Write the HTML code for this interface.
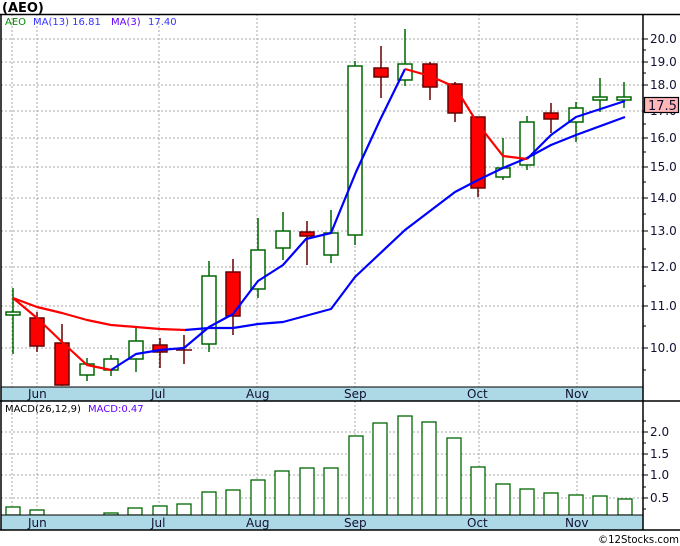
<!DOCTYPE html>
<html><head><meta charset="utf-8"><style>
html,body{margin:0;padding:0;background:#fff;}
svg{display:block;font-family:"DejaVu Sans","Liberation Sans",sans-serif;}
</style></head><body>
<svg width="680" height="546" viewBox="0 0 680 546" xmlns="http://www.w3.org/2000/svg">
<rect width="680" height="546" fill="#fff"/>
<text x="2" y="12" font-size="13" font-weight="bold" fill="#000">(AEO)</text>
<g stroke="#aaa" stroke-dasharray="2,2" stroke-width="1">
<line x1="1" x2="643" y1="39" y2="39"/><line x1="1" x2="643" y1="62" y2="62"/><line x1="1" x2="643" y1="85" y2="85"/><line x1="1" x2="643" y1="111" y2="111"/><line x1="1" x2="643" y1="138" y2="138"/><line x1="1" x2="643" y1="167" y2="167"/><line x1="1" x2="643" y1="198" y2="198"/><line x1="1" x2="643" y1="231" y2="231"/><line x1="1" x2="643" y1="267" y2="267"/><line x1="1" x2="643" y1="306" y2="306"/><line x1="1" x2="643" y1="348" y2="348"/>
<line x1="12" x2="12" y1="14" y2="387"/><line x1="37" x2="37" y1="14" y2="387"/><line x1="159" x2="159" y1="14" y2="387"/><line x1="257" x2="257" y1="14" y2="387"/><line x1="355" x2="355" y1="14" y2="387"/><line x1="479" x2="479" y1="14" y2="387"/><line x1="577" x2="577" y1="14" y2="387"/>
<line x1="1" x2="643" y1="432" y2="432"/><line x1="1" x2="643" y1="454" y2="454"/><line x1="1" x2="643" y1="475" y2="475"/><line x1="1" x2="643" y1="498" y2="498"/>
<line x1="12" x2="12" y1="401" y2="515"/><line x1="37" x2="37" y1="401" y2="515"/><line x1="159" x2="159" y1="401" y2="515"/><line x1="257" x2="257" y1="401" y2="515"/><line x1="355" x2="355" y1="401" y2="515"/><line x1="479" x2="479" y1="401" y2="515"/><line x1="577" x2="577" y1="401" y2="515"/>
</g>
<text x="5" y="25" font-size="10" fill="#080">AEO</text>
<text x="33" y="25" font-size="10" fill="#33f">MA(13)  16.81</text>
<text x="111" y="25" font-size="10" fill="#60f">MA(3)</text>
<text x="148" y="25" font-size="10" fill="#33f">17.40</text>
<g stroke-width="1.5">
<g stroke="#060" fill="#fff">
<line x1="13" x2="13" y1="288" y2="354"/><rect x="6" y="312" width="14" height="3"/>
<line x1="87" x2="87" y1="358" y2="381"/><rect x="80" y="364" width="14" height="11"/>
<line x1="111" x2="111" y1="355" y2="376"/><rect x="104" y="359" width="14" height="11"/>
<line x1="136" x2="136" y1="328" y2="372"/><rect x="129" y="341" width="14" height="18"/>
<line x1="209" x2="209" y1="261" y2="352"/><rect x="202" y="276" width="14" height="68"/>
<line x1="258" x2="258" y1="218" y2="298"/><rect x="251" y="250" width="14" height="39"/>
<line x1="283" x2="283" y1="212" y2="260"/><rect x="276" y="231" width="14" height="17"/>
<line x1="331" x2="331" y1="210" y2="263"/><rect x="324" y="233" width="14" height="22"/>
<line x1="355" x2="355" y1="61" y2="245"/><rect x="348" y="66" width="14" height="169"/>
<line x1="405" x2="405" y1="29" y2="86"/><rect x="398" y="64" width="14" height="16"/>
<line x1="503" x2="503" y1="138" y2="180"/><rect x="496" y="168" width="14" height="9"/>
<line x1="527" x2="527" y1="116" y2="170"/><rect x="520" y="122" width="14" height="43"/>
<line x1="576" x2="576" y1="102" y2="142"/><rect x="569" y="108" width="14" height="14"/>
<line x1="600" x2="600" y1="78" y2="112"/><rect x="593" y="97" width="14" height="3"/>
<line x1="624" x2="624" y1="82" y2="108"/><rect x="617" y="97" width="14" height="3"/>
</g>
<g stroke="#600" fill="#f00">
<line x1="37" x2="37" y1="312" y2="352"/><rect x="30" y="318" width="14" height="28"/>
<line x1="62" x2="62" y1="324" y2="386"/><rect x="55" y="343" width="14" height="42"/>
<line x1="160" x2="160" y1="338" y2="368"/><rect x="153" y="345" width="14" height="7"/>
<line x1="184" x2="184" y1="335" y2="364"/><line x1="176" x2="192" y1="350" y2="350"/>
<line x1="233" x2="233" y1="259" y2="335"/><rect x="226" y="272" width="14" height="44"/>
<line x1="307" x2="307" y1="221" y2="265"/><rect x="300" y="232" width="14" height="4"/>
<line x1="381" x2="381" y1="46" y2="98"/><rect x="374" y="68" width="14" height="9"/>
<line x1="430" x2="430" y1="62" y2="100"/><rect x="423" y="64" width="14" height="23"/>
<line x1="455" x2="455" y1="82" y2="122"/><rect x="448" y="84" width="14" height="29"/>
<line x1="478" x2="478" y1="117" y2="197"/><rect x="471" y="117" width="14" height="71"/>
<line x1="551" x2="551" y1="103" y2="133"/><rect x="544" y="113" width="14" height="6"/>
</g>
</g>
<g fill="none" stroke-width="2.2" stroke-linejoin="round">
<polyline stroke="#f00" points="13,298 37,307 62,313 87,320 111,325 136,327 160,329 185,330"/>
<polyline stroke="#00f" points="185,330 209,328 233,328 258,324 283,322 331,309 355,277 405,230 430,211 455,192 478,180 503,168 527,158 551,145 576,135 625,117"/>
<polyline stroke="#f00" points="13,298 37,318 62,342 87,365 111,370"/>
<polyline stroke="#00f" points="111,370 136,354 160,350 184,348 209,327 233,314 258,281 283,265 306,239 331,233 356,172 380,120 405,69"/>
<polyline stroke="#f00" points="405,69 430,76 455,87 478,124 503,156 527,159"/>
<polyline stroke="#00f" points="527,159 551,135 576,117 625,101"/>
</g>
<g stroke="#060" stroke-width="1.3" fill="#fff">
<rect x="6" y="507" width="14" height="8"/><rect x="30" y="510" width="14" height="5"/><rect x="104" y="513" width="14" height="2"/><rect x="128" y="508" width="14" height="7"/><rect x="153" y="506" width="14" height="9"/><rect x="177" y="504" width="14" height="11"/><rect x="202" y="492" width="14" height="23"/><rect x="226" y="490" width="14" height="25"/><rect x="251" y="480" width="14" height="35"/><rect x="275" y="471" width="14" height="44"/><rect x="300" y="468" width="14" height="47"/><rect x="324" y="468" width="14" height="47"/><rect x="349" y="436" width="14" height="79"/><rect x="373" y="423" width="14" height="92"/><rect x="398" y="416" width="14" height="99"/><rect x="422" y="422" width="14" height="93"/><rect x="447" y="438" width="14" height="77"/><rect x="471" y="467" width="14" height="48"/><rect x="496" y="484" width="14" height="31"/><rect x="520" y="489" width="14" height="26"/><rect x="544" y="493" width="14" height="22"/><rect x="569" y="495" width="14" height="20"/><rect x="593" y="496" width="14" height="19"/><rect x="618" y="499" width="14" height="16"/>
</g>
<text x="5" y="412" font-size="10" fill="#000">MACD(26,12,9)</text>
<text x="88" y="412" font-size="10" fill="#60f">MACD:0.47</text>
<rect x="1" y="387" width="642" height="14" fill="#add8e6"/>
<rect x="1" y="515" width="642" height="15" fill="#add8e6"/>
<g font-size="12" fill="#113">
<text x="28" y="398">Jun</text><text x="151" y="398">Jul</text><text x="246" y="398">Aug</text><text x="344" y="398">Sep</text><text x="467" y="398">Oct</text><text x="565" y="398">Nov</text>
<text x="28" y="527">Jun</text><text x="151" y="527">Jul</text><text x="246" y="527">Aug</text><text x="344" y="527">Sep</text><text x="467" y="527">Oct</text><text x="565" y="527">Nov</text>
</g>
<g stroke="#000" stroke-width="1.5" fill="none">
<line x1="0" x2="680" y1="14.5" y2="14.5"/>
<line x1="1" x2="1" y1="14" y2="530"/>
<line x1="643" x2="643" y1="14" y2="530"/>
<line x1="0" x2="680" y1="401" y2="401"/>
<line x1="0" x2="680" y1="530" y2="530"/>
<line x1="1" x2="643" y1="387" y2="387" stroke-width="1"/>
<line x1="1" x2="643" y1="515" y2="515" stroke-width="1"/>
</g>
<g stroke="#000" stroke-width="1">
<line x1="643" x2="648" y1="39" y2="39"/><line x1="643" x2="648" y1="62" y2="62"/><line x1="643" x2="648" y1="85" y2="85"/><line x1="643" x2="648" y1="111" y2="111"/><line x1="643" x2="648" y1="138" y2="138"/><line x1="643" x2="648" y1="167" y2="167"/><line x1="643" x2="648" y1="198" y2="198"/><line x1="643" x2="648" y1="231" y2="231"/><line x1="643" x2="648" y1="267" y2="267"/><line x1="643" x2="648" y1="306" y2="306"/><line x1="643" x2="648" y1="348" y2="348"/>
<line x1="643" x2="646" y1="50" y2="50"/><line x1="643" x2="646" y1="73" y2="73"/><line x1="643" x2="646" y1="124" y2="124"/><line x1="643" x2="646" y1="152" y2="152"/><line x1="643" x2="646" y1="182" y2="182"/><line x1="643" x2="646" y1="214" y2="214"/><line x1="643" x2="646" y1="249" y2="249"/><line x1="643" x2="646" y1="286" y2="286"/><line x1="643" x2="646" y1="326" y2="326"/><line x1="643" x2="646" y1="370" y2="370"/>
<line x1="643" x2="648" y1="432" y2="432"/><line x1="643" x2="648" y1="454" y2="454"/><line x1="643" x2="648" y1="475" y2="475"/><line x1="643" x2="648" y1="498" y2="498"/>
<line x1="643" x2="646" y1="421" y2="421"/><line x1="643" x2="646" y1="443" y2="443"/><line x1="643" x2="646" y1="465" y2="465"/><line x1="643" x2="646" y1="487" y2="487"/><line x1="643" x2="646" y1="509" y2="509"/>
</g>
<g font-size="12" fill="#113">
<text x="650" y="43">20.0</text><text x="650" y="66">19.0</text><text x="650" y="89">18.0</text><text x="650" y="115">17.0</text><text x="650" y="142">16.0</text><text x="650" y="171">15.0</text><text x="650" y="202">14.0</text><text x="650" y="235">13.0</text><text x="650" y="271">12.0</text><text x="650" y="310">11.0</text><text x="650" y="352">10.0</text>
<text x="650" y="436">2.0</text><text x="650" y="458">1.5</text><text x="650" y="479">1.0</text><text x="650" y="502">0.5</text>
</g>
<rect x="644.5" y="97.5" width="34" height="15" fill="#ffb6b6" stroke="#000" stroke-width="1.2"/>
<text x="648" y="110" font-size="13" fill="#113">17.5</text>
<text x="598" y="543" font-size="11" fill="#000" textLength="81" lengthAdjust="spacingAndGlyphs">©12Stocks.com</text>
</svg>
</body></html>
